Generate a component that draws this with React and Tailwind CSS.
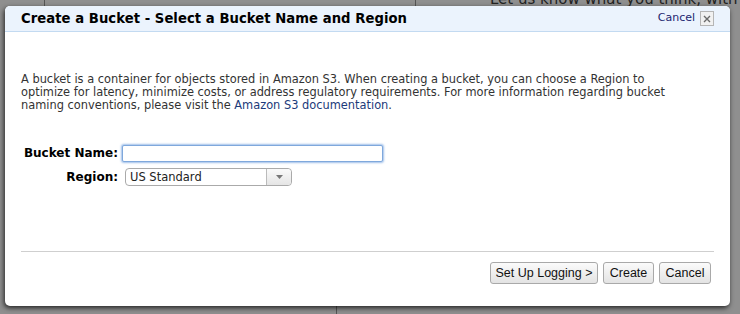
import React from "react";

const verdana = "font-['DejaVu_Sans',Verdana,sans-serif]";
const arial = "font-['Liberation_Sans',Arial,sans-serif]";

const Button = ({ children, className = "" }) => (
  <button
    className={`h-[22px] whitespace-nowrap rounded-[3px] border border-[#a9a9a9] bg-gradient-to-b from-[#fbfbfb] to-[#e3e3e3] text-[12.5px] text-[#111] leading-none ${arial} ${className}`}
  >
    {children}
  </button>
);

export default function App() {
  return (
    <div className="relative w-[740px] h-[314px] overflow-hidden bg-[#8f8f8f]">
      {/* page behind the dialog */}
      <div className="flex flex-col h-full">
        <div className="h-[8px] flex shrink-0">
          <div className="w-[45px] shrink-0 border-r border-[#555]" />
          <div className="w-[371px] shrink-0 border-r border-[#555]" />
          <div className={`-mt-[12px] pl-[74px] whitespace-nowrap text-[15px] text-[#222] ${verdana}`}>
            Let us know what you think, with the !
          </div>
        </div>
        <div className="flex-1 flex">
          <div className="w-[337px] shrink-0 border-r border-[#555]" />
        </div>
      </div>

      {/* dialog */}
      <div className="absolute left-[5px] top-[6px] w-[725px] h-[300px] rounded-[5px] bg-white shadow-[-1px_2px_5px_rgba(0,0,0,0.75)] overflow-hidden flex flex-col">
        <div className="h-[26px] shrink-0 flex items-center justify-between pl-[16px] pr-[16px] bg-[#ebf3fd] border-b border-[#c3daf1]">
          <h1 className={`text-[13.2px] font-bold text-black tracking-[0.05px] ${verdana}`}>
            Create a Bucket - Select a Bucket Name and Region
          </h1>
          <div className="flex items-center gap-[5px]">
            <a className={`text-[11px] text-[#1b2670] ${verdana}`}>Cancel</a>
            <span className="w-[14px] h-[15px] flex items-center justify-center border border-[#b5b5b5] bg-[#f1f1f1] text-[#666]">
              <svg width="8" height="8" viewBox="0 0 8 8">
                <path d="M1 1L7 7M7 1L1 7" stroke="#6a6a6a" strokeWidth="1.4" />
              </svg>
            </span>
          </div>
        </div>

        <div className="flex-1 flex flex-col px-[16px]">
          <p className={`mt-[41px] text-[11.4px] leading-[13px] text-[#333] ${verdana}`}>
            A bucket is a container for objects stored in Amazon S3. When creating a bucket, you can choose a Region to
            <br />
            optimize for latency, minimize costs, or address regulatory requirements. For more information regarding bucket
            <br />
            naming conventions, please visit the <a className="text-[#1b3a7a]">Amazon S3 documentation</a>.
          </p>

          <div className={`mt-[32px] grid grid-cols-[97px_auto] gap-x-[4px] gap-y-[6px] items-center ${verdana}`}>
            <label className="text-right text-[12px] font-bold text-black">Bucket Name:</label>
            <input className="w-[261px] h-[17px] rounded-[2px] border border-[#7fa8dc] shadow-[0_0_2px_1px_rgba(120,165,225,0.7)] outline-none bg-white" />
            <label className="text-right text-[12px] font-bold text-black">Region:</label>
            <div className="ml-[3px] w-[167px] h-[18px] flex rounded-[4px] border border-[#aaa] bg-white">
              <span className="flex-1 pl-[4px] text-[11.5px] leading-[16px] text-[#222]">US Standard</span>
              <span className="w-[25px] flex items-center justify-center border-l border-[#bbb] rounded-r-[4px] bg-gradient-to-b from-[#fafafa] to-[#e5e5e5]">
                <svg width="7" height="4" viewBox="0 0 7 4">
                  <path d="M0 0H7L3.5 4Z" fill="#777" />
                </svg>
              </span>
            </div>
          </div>

          <div className="mt-auto border-t border-[#cfcfcf] pt-[10px] pb-[22px] flex justify-end gap-[5px] pr-[3px]">
            <Button className="w-[108px]">Set Up Logging &gt;</Button>
            <Button className="w-[51px]">Create</Button>
            <Button className="w-[52px]">Cancel</Button>
          </div>
        </div>
      </div>
    </div>
  );
}
